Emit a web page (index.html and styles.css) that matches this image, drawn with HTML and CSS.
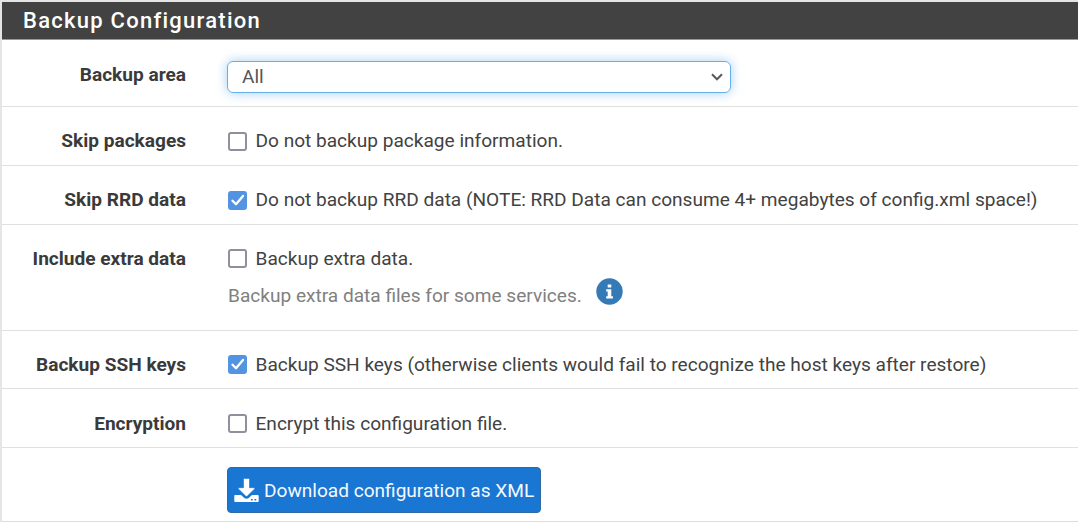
FILE: index.html
```html
<!DOCTYPE html>
<html lang="en">
<head>
<meta charset="utf-8">
<title>Backup Configuration</title>
<link rel="stylesheet" href="styles.css">
</head>
<body>
<form class="panel">
  <h2 class="panel-heading"><span>Backup Configuration</span></h2>
  <div class="row row-select">
    <span class="label">Backup area</span>
    <div class="select"><span>All</span>
      <svg class="chevron" width="12" height="8" viewBox="0 0 12 8"><path d="M1 1.2 6 6.3 11 1.2" fill="none" stroke="#5a5a5a" stroke-width="2"/></svg>
    </div>
  </div>
  <div class="row">
    <span class="label">Skip packages</span>
    <label class="option"><span class="box"></span><span>Do not backup package information.</span></label>
  </div>
  <div class="row">
    <span class="label">Skip RRD data</span>
    <label class="option"><span class="box checked"><svg width="19" height="19" viewBox="0 0 19 19"><path d="M4.5 9.8 8 13.3 15 5" fill="none" stroke="#fff" stroke-width="2.3" stroke-linecap="round" stroke-linejoin="round"/></svg></span><span>Do not backup RRD data (NOTE: RRD Data can consume 4+ megabytes of config.xml space!)</span></label>
  </div>
  <div class="row row-lower row-extra">
    <span class="label">Include extra data</span>
    <div class="field">
      <label class="option"><span class="box"></span><span>Backup extra data.</span></label>
      <div class="help"><span>Backup extra data files for some services.</span>
        <svg class="info" width="27" height="27" viewBox="0 0 27 27"><circle cx="13.5" cy="13.5" r="13.2" fill="#337ab7"/><path d="M11.7 6.5h3.6v3h-3.6zM10.2 11.2h5.1v7.1h1.6v2.3h-6.7v-2.3h1.5v-4.8h-1.5z" fill="#fff"/></svg>
      </div>
    </div>
  </div>
  <div class="row row-lower">
    <span class="label">Backup SSH keys</span>
    <label class="option"><span class="box checked"><svg width="19" height="19" viewBox="0 0 19 19"><path d="M4.5 9.8 8 13.3 15 5" fill="none" stroke="#fff" stroke-width="2.3" stroke-linecap="round" stroke-linejoin="round"/></svg></span><span>Backup SSH keys (otherwise clients would fail to recognize the host keys after restore)</span></label>
  </div>
  <div class="row row-lower">
    <span class="label">Encryption</span>
    <label class="option"><span class="box"></span><span>Encrypt this configuration file.</span></label>
  </div>
  <div class="row row-action">
    <span class="label"></span>
    <button class="download" type="button">
      <svg width="25" height="25" viewBox="0 0 25 25"><path d="M1.2 17H7l3.3 3q2.2 1.6 4.4 0l3.3-3h5.8q.9 0 .9.9v5.2q0 .9-.9.9H1.2q-.9 0-.9-.9v-5.2q0-.9.9-.9z" fill="#fff"/><path d="M9.5.4h6v9.3h4.7q1.2.2.4 1.2l-7.3 7.2q-.8.7-1.6 0l-7.3-7.2q-.7-1 .5-1.2h4.6z" fill="#fff" stroke="#1976d2" stroke-width=".6"/><path d="M17 21h1.7v1.4H17zM20.5 21h1.7v1.4h-1.7z" fill="#1976d2"/></svg>
      <span>Download configuration as XML</span>
    </button>
  </div>
</form>
</body>
</html>
```
FILE: styles.css
```css
* { box-sizing: border-box; }
body {
  margin: 0;
  background: #e5e5e5;
  color: #424242;
  font: 19.08px/27px Roboto, sans-serif;
  overflow: hidden;
}
.panel {
  margin: 2px 0 0 2px;
  height: 520px;
  background: #fff;
  border-bottom: 1px solid #ddd;
}
.panel-heading {
  margin: 0;
  height: 38px;
  padding-left: 21px;
  background: #424242;
  border-bottom: 1px solid #999;
  color: #fff;
  font-size: 22px;
  font-weight: 500;
  line-height: 37px;
  letter-spacing: 1.26px;
}
.row {
  display: flex;
  align-items: flex-start;
  height: 58.6px;
  padding-top: 19.8px;
  border-bottom: 1px solid #e0e0e0;
}
.row-lower { padding-top: 20.4px; }
.row-select { height: 67.4px; padding-top: 21px; }
.row-select .label { margin-top: -0.5px; }
.row-extra { height: 106px; }
.row-action { height: 73px; padding-top: 19px; border-bottom: 0; }
.label {
  flex: 0 0 184px;
  margin-right: 41px;
  text-align: right;
  font-weight: 700;
  color: #3a3a3a;
  white-space: nowrap;
}
.select {
  display: flex;
  align-items: center;
  justify-content: space-between;
  width: 504px;
  height: 32px;
  padding: 0 7px 1px 14px;
  border: 1px solid #66afe9;
  border-radius: 6px;
  box-shadow: 0 0 11px rgba(102, 175, 233, .6);
  color: #555;
}
.option {
  display: flex;
  align-items: flex-start;
  white-space: nowrap;
}
.box {
  width: 19px;
  height: 19px;
  margin: 5px 8.5px 0 1px;
  border: 2px solid #8f8f9d;
  border-radius: 3px;
  background: #fff;
}
.row-lower .box { margin-top: 4.5px; }
.box.checked { border: 0; background: #5294e2; }
.box svg { display: block; }
.help {
  display: flex;
  margin: 10px 0 0 1px;
  color: #808080;
  white-space: nowrap;
}
.info { margin: -4px 0 0 14px; }
.download {
  display: flex;
  align-items: center;
  width: 314px;
  height: 46px;
  padding: 0 0 0 6px;
  border: 1px solid #2e6da4;
  border-radius: 4px;
  background: #1976d2;
  color: #f5f9ff;
  font: inherit;
  white-space: nowrap;
}
.download svg { flex: none; margin: 2px 5px 0 0; }
.download span { padding-top: 1px; }
```
